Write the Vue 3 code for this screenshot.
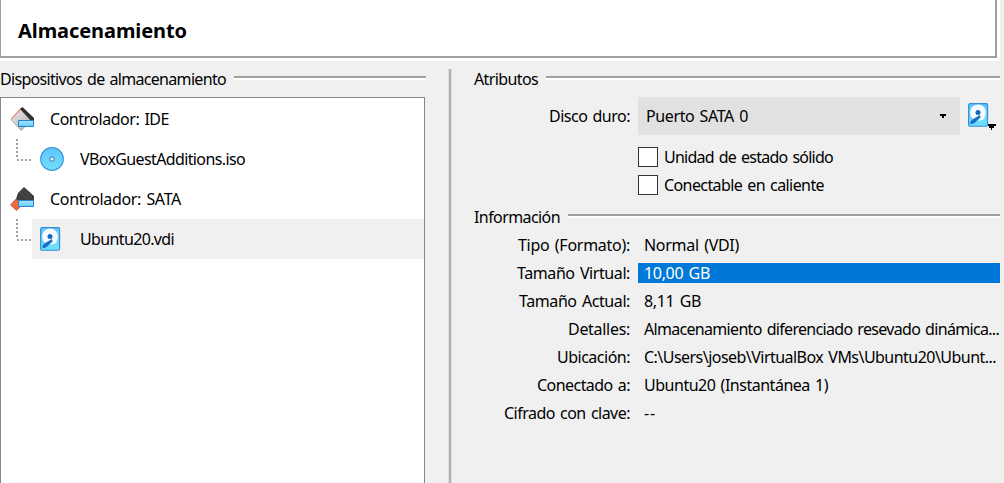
<script setup>
const devices = [
  { icon: 'ide', text: 'Controlador: IDE', w: 119 },
  { icon: 'disc', text: 'VBoxGuestAdditions.iso', w: 165, child: true },
  { icon: 'sata', text: 'Controlador: SATA', w: 131 },
  { icon: 'disk', text: 'Ubuntu20.vdi', w: 94, child: true, selected: true },
]
const options = [
  { text: 'Unidad de estado sólido', w: 169 },
  { text: 'Conectable en caliente', w: 160 },
]
const details = [
  { label: 'Tipo (Formato):', lw: 112, value: 'Normal (VDI)', vw: 95 },
  { label: 'Tamaño Virtual:', lw: 113, value: '10,00 GB', vw: 66, selected: true },
  { label: 'Tamaño Actual:', lw: 111, value: '8,11 GB', vw: 57 },
  { label: 'Detalles:', lw: 62, value: 'Almacenamiento diferenciado resevado dinámica...', vw: 355 },
  { label: 'Ubicación:', lw: 73, value: 'C:\\Users\\joseb\\VirtualBox VMs\\Ubuntu20\\Ubunt...', vw: 352 },
  { label: 'Conectado a:', lw: 93, value: 'Ubuntu20 (Instantánea 1)', vw: 184 },
  { label: 'Cifrado con clave:', lw: 126, value: '--', vw: 12 },
]

// Tracks a label so that it spans the given width in pixels.
const vFit = {
  mounted(el, { value }) {
    const natural = el.getBoundingClientRect().width
    el.style.letterSpacing = (value - natural) / el.textContent.length + 'px'
  },
}
</script>

<template>
  <main class="page">
    <svg class="defs" width="0" height="0">
      <defs>
        <linearGradient id="blue" x1="0" y1="0" x2="0" y2="1">
          <stop offset="0" stop-color="#5fc4fb" /><stop offset="1" stop-color="#70e0ff" />
        </linearGradient>
        <linearGradient id="tag" x1="0" y1="0" x2="0" y2="1">
          <stop offset="0" stop-color="#a9e2ff" /><stop offset="1" stop-color="#62d0fb" />
        </linearGradient>
        <linearGradient id="metal" x1="0" y1="0" x2="1" y2="1">
          <stop offset="0" stop-color="#f4f4f4" /><stop offset="1" stop-color="#a8a8a8" />
        </linearGradient>
        <symbol id="ide" viewBox="0 0 24 24">
          <path d="M12 1 1 12.8l10 10.6L23 12Z" fill="url(#metal)" stroke="#999" stroke-width=".8" />
          <path d="m4 13 9-9M6 15l10-9M8 17l10-9M10 20l10-9" stroke="#c3c3c3" stroke-width=".8" />
          <path d="M1 12.3 11 1.5" stroke="#e58d74" stroke-width="1.2" />
          <path d="m10 2 2.5-2L24 11v4h-2Z" fill="#303030" />
          <path d="M8.5 13.5h15v6h-15z" fill="url(#tag)" stroke="#2b84c3" />
        </symbol>
        <symbol id="sata" viewBox="0 0 24 24">
          <path d="m6 12-5.5 6 6 5.5 5.5-5.5Z" fill="#ee6840" stroke="#c64928" stroke-width=".8" />
          <path d="M6 12 8 6 14 0l10 9v5H9Z" fill="#3d3d3d" />
          <path d="m9 5 10 8M12 3l10 8" stroke="#565656" stroke-width=".9" />
          <path d="M8.5 13.5h15v6h-15z" fill="url(#tag)" stroke="#2b84c3" />
        </symbol>
        <symbol id="disc" viewBox="0 0 24 24">
          <circle cx="12" cy="12" r="11.3" fill="url(#blue)" stroke="#3795da" stroke-width="1.2" />
          <circle cx="12" cy="12" r="2.1" fill="#eef8ff" stroke="#568fc0" stroke-width="1.2" />
        </symbol>
        <symbol id="disk" viewBox="0 0 24 24">
          <rect x=".6" y=".6" width="19" height="22.6" rx="1.5" fill="url(#blue)" stroke="#318ed5" stroke-width="1.1" />
          <circle cx="10" cy="9.5" r="8" fill="#f6fbff" />
          <path d="M14.6 12.8 17 15.2q-3 2.5-6 2.3Z" fill="#f6fbff" />
          <circle cx="10" cy="9.5" r="2.5" fill="#1769bd" />
          <path d="m12 12 .6 2.6-6.1 5.5q-3.2 1.6-4.1.3-.5-1.3 2-3.8Z" fill="#176fc8" />
        </symbol>
      </defs>
    </svg>

    <header class="heading"><h1><span v-fit="169">Almacenamiento</span></h1></header>

    <div class="columns">
      <section class="storage">
        <div class="title"><span v-fit="226">Dispositivos de almacenamiento</span><i class="rule"></i></div>
        <ul class="tree">
          <li v-for="d in devices" :key="d.text" :class="{ child: d.child, selected: d.selected }">
            <i v-if="d.child" class="branch">
              <svg width="16" height="24" shape-rendering="crispEdges">
                <path d="M1 0v20M1 21h14" fill="none" stroke="#a0a0a0" stroke-width="2" stroke-dasharray="2 2" />
              </svg>
            </i>
            <div class="item">
              <svg class="icon" width="24" height="24"><use :href="'#' + d.icon" /></svg>
              <span v-fit="d.w">{{ d.text }}</span>
            </div>
          </li>
        </ul>
      </section>

      <div class="splitter"></div>

      <section class="attributes">
        <div class="title"><span v-fit="64">Atributos</span><i class="rule"></i></div>
        <div class="port">
          <label class="label"><span v-fit="81">Disco duro:</span></label>
          <div class="combo">
            <span v-fit="102">Puerto SATA 0</span>
            <svg width="6" height="4" shape-rendering="crispEdges"><path d="M0 0h6v2H4v2H2V2H0z" /></svg>
          </div>
          <div class="choose">
            <svg width="24" height="24"><use href="#disk" /></svg>
            <svg class="more" width="8" height="6" shape-rendering="crispEdges"><path d="M0 0h8v2H6v2H4v2H3V4H1V2H0z" /></svg>
          </div>
        </div>
        <div class="options">
          <label v-for="o in options" :key="o.text"><i class="box"></i><span v-fit="o.w">{{ o.text }}</span></label>
        </div>
        <div class="title info"><span v-fit="86">Información</span><i class="rule"></i></div>
        <dl>
          <div v-for="r in details" :key="r.label" class="detail">
            <dt class="label"><span v-fit="r.lw">{{ r.label }}</span></dt>
            <dd :class="{ selected: r.selected }"><span v-fit="r.vw">{{ r.value }}</span></dd>
          </div>
        </dl>
      </section>
    </div>
  </main>
</template>

<style>
body { margin: 0; background: #f0f0f0; }
</style>

<style scoped>
* { box-sizing: border-box; }
.page {
  width: 1004px; height: 483px; overflow: hidden; background: #f0f0f0; color: #000;
  font: 16px/20px "Noto Sans", "Open Sans", sans-serif; word-spacing: 1.5px;
  display: flex; flex-direction: column;
}
.defs { position: absolute; }
span { display: inline-block; white-space: nowrap; flex: none; }
svg { display: block; flex: none; }
.heading {
  width: 1000px; height: 61px; background: #fff; border-right: 3px solid #fff; border-bottom: 3px solid #fff; flex: none;
}
h1 {
  margin: 0; height: 58px; padding: 17px 0 0 17px; font-size: 20px; line-height: 28px; font-weight: 700;
  border: solid #a0a0a0; border-width: 0 2px 2px 1px;
}
.columns { display: flex; flex: 1; min-height: 0; }
.storage { width: 426px; display: flex; flex-direction: column; padding-top: 8px; }
.title { display: flex; gap: 8px; height: 20px; flex: none; }
.rule { flex: 1; height: 4px; margin-top: 7px; background: linear-gradient(#a0a0a0 50%, #fff 50%); }
.tree {
  list-style: none; margin: 8px 0 0; padding: 1px 0 0; width: 425px; flex: 1;
  background: #fff; border: solid #828790; border-width: 1px 1px 0;
}
li { display: flex; height: 40px; }
.item { display: flex; flex: 1; align-items: center; gap: 16px; padding-left: 9px; }
.child .item { padding-left: 8px; }
.branch { width: 31px; padding-left: 15px; }
.selected .item { background: #f0f0f0; }
.splitter { width: 4px; margin: 8px 22px 0; background: linear-gradient(90deg, #dedede 25%, #b0b0b0 25% 75%, #dedede 75%); }
.attributes { width: 526px; padding-top: 8px; }
.port { display: flex; margin-top: 8px; height: 38px; align-items: center; }
.label { width: 156px; text-align: right; flex: none; }
.combo {
  width: 322px; height: 38px; margin-left: 8px; padding: 0 14px 0 8px; background: #e1e1e1;
  display: flex; align-items: center; justify-content: space-between;
}
.choose { position: relative; margin-left: 8px; margin-bottom: 2px; }
.more { position: absolute; left: 20px; top: 21px; }
.options { display: flex; flex-direction: column; gap: 8px; margin: 12px 0 0 164px; }
.options label { display: flex; gap: 6px; height: 20px; }
.box { width: 20px; height: 20px; background: #fff; border: 1px solid #333; }
.info { margin-top: 12px; }
dl { margin: 8px 0 0; display: flex; flex-direction: column; gap: 8px; }
.detail { display: flex; height: 20px; }
dd { margin: 0 0 0 8px; padding-left: 6px; width: 362px; }
dd.selected { background: #0078d7; color: #fff; }
</style>
